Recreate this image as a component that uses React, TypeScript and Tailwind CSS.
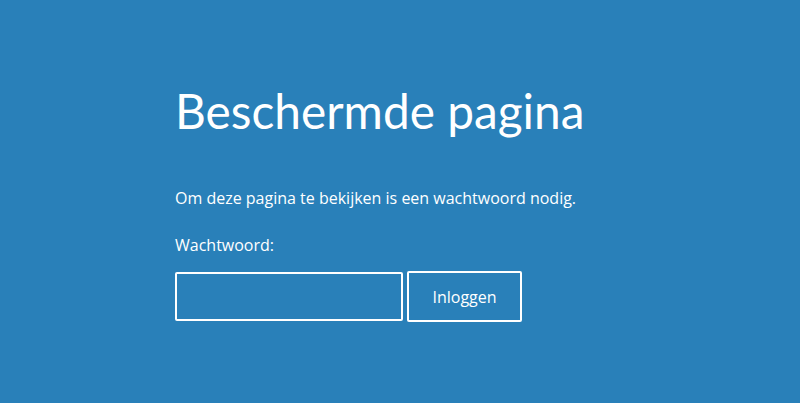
export default function App() {
  return (
    <div className="min-h-[403px] w-full bg-[#2980b9] text-white font-['Open_Sans',sans-serif]">
      <div className="mx-auto w-[450px] pt-[76px]">
        <h1 className="font-['Lato',sans-serif] text-[47.8px] leading-[70px] font-normal">
          Beschermde pagina
        </h1>
        <p className="mt-[40px] text-[16px] leading-[24px]">
          Om deze pagina te bekijken is een wachtwoord nodig.
        </p>
        <label className="block mt-[23px] text-[16px] leading-[24px]" htmlFor="pw">
          Wachtwoord:
        </label>
        <div className="mt-[14px] flex items-center gap-[4px]">
          <input
            id="pw"
            type="password"
            className="w-[228px] h-[49px] border-2 border-white rounded-[2px] bg-transparent outline-none px-3 text-white"
          />
          <button className="w-[115px] h-[51px] border-2 border-white rounded-[2px] bg-transparent text-[16px] text-white">
            Inloggen
          </button>
        </div>
      </div>
    </div>
  );
}
